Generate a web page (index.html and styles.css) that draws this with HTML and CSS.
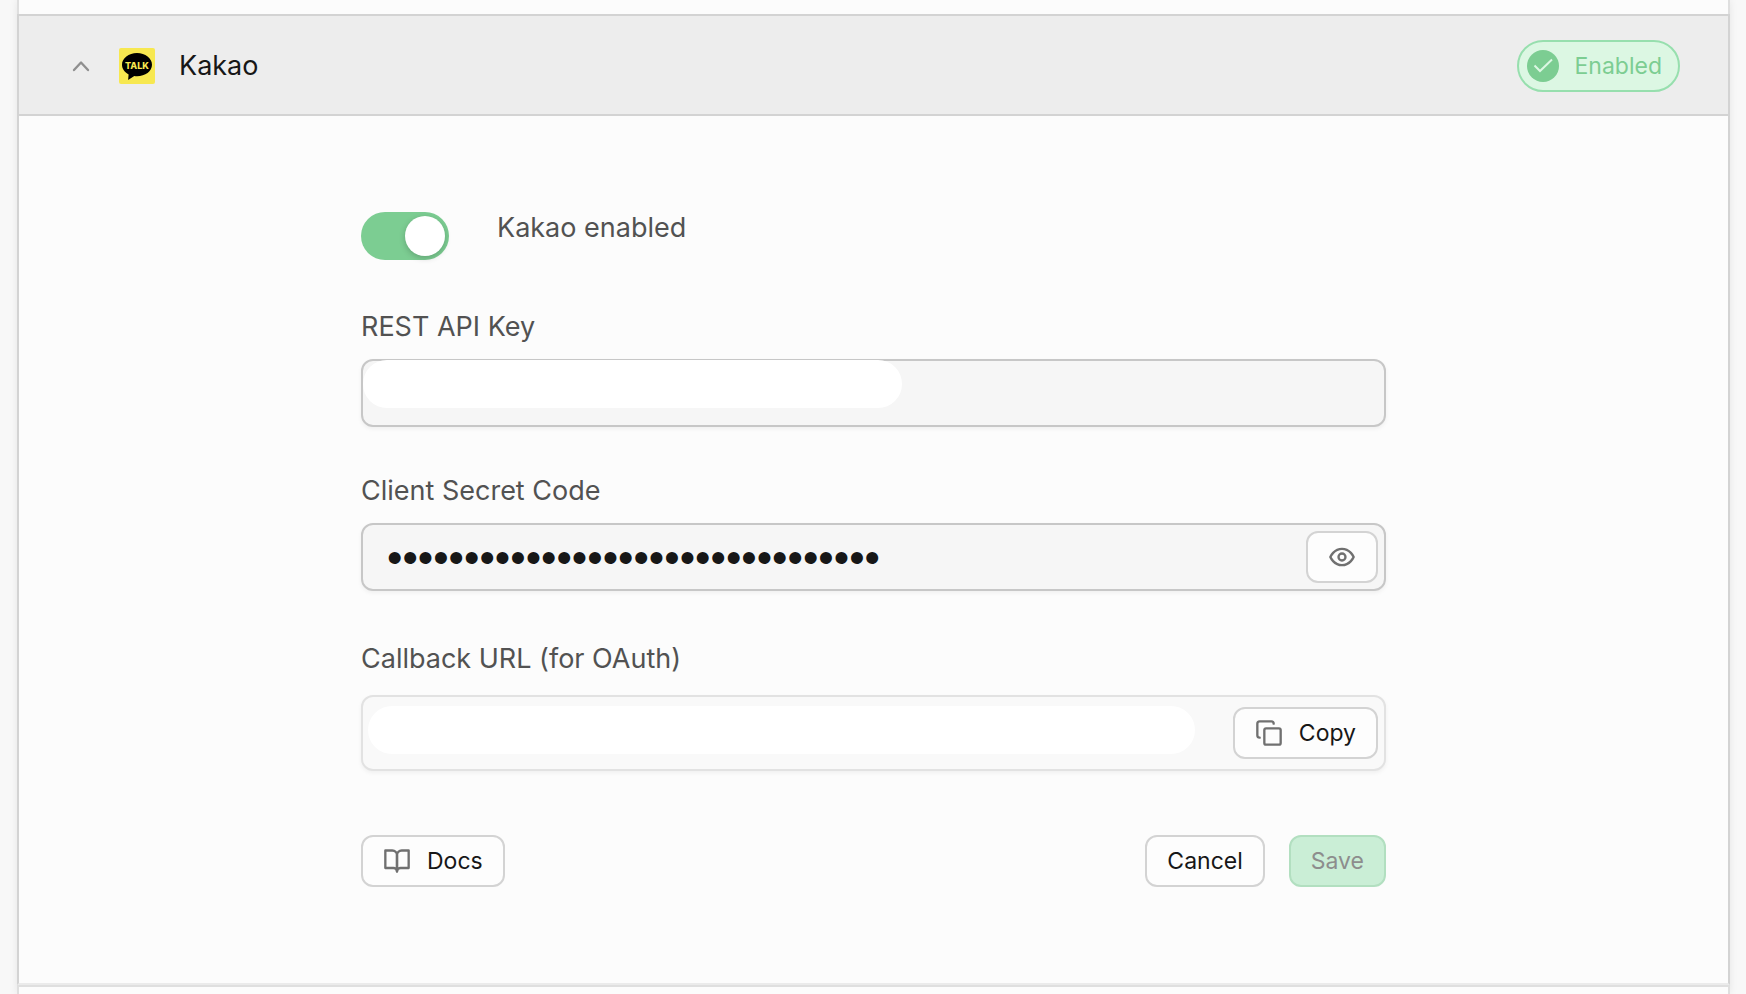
FILE: index.html
```html
<!DOCTYPE html>
<html lang="en">
<head>
  <meta charset="UTF-8" />
  <meta name="viewport" content="width=device-width, initial-scale=1.0" />
  <title>Auth Providers</title>
  <link rel="stylesheet" href="styles.css">
</head>
<body>
  <main class="providers">
    <div class="provider-prev"></div>

    <section class="provider">
      <header class="provider-header">
        <button class="collapse" type="button" aria-label="Collapse Kakao">
          <svg class="icon" viewBox="0 0 24 24"><path d="m18 15.500-6-6.500-6 6.500" /></svg>
        </button>
        <svg class="logo" viewBox="0 0 36 36">
          <rect width="36" height="36" rx="2" fill="#f7e850" />
          <path d="M18 5C9.700 5 3 10.200 3 16.700c0 4.100 2.600 7.600 6.600 9.700L9.100 32l6.200-4c.9.200 1.800.2 2.700.2 8.300 0 15-5.100 15-11.500S26.300 5 18 5z" fill="#000" />
          <text class="logo-text" x="18" y="20.500" text-anchor="middle">TALK</text>
        </svg>
        <h2 class="provider-name">Kakao</h2>
        <span class="badge">
          <svg class="badge-icon" viewBox="0 0 32 32">
            <circle cx="16" cy="16" r="16" fill="#7ccd92" />
            <path d="m7.500 15.500 5.500 5.500L25 9.500" fill="none" stroke="#dcf7e3" stroke-width="2" />
          </svg>
          Enabled
        </span>
      </header>

      <form class="provider-form">
        <div class="toggle-row">
          <input class="toggle" type="checkbox" id="enabled" checked />
          <label for="enabled">Kakao enabled</label>
        </div>

        <div class="field">
          <label for="apiKey">REST API Key</label>
          <div class="control">
            <input class="text-input" type="text" id="apiKey" />
            <span class="mask mask-key"></span>
          </div>
        </div>

        <div class="field">
          <label for="secret">Client Secret Code</label>
          <div class="control secret">
            <input class="text-input password" type="password" id="secret" value="abcdefghijklmnopqrstuvwxyz012345" />
            <button class="btn btn-eye" type="button" aria-label="Show secret">
              <svg class="icon" viewBox="0 0 24 24">
                <path d="M2 12s3-7 10-7 10 7 10 7-3 7-10 7-10-7-10-7Z" />
                <circle cx="12" cy="12" r="3" />
              </svg>
            </button>
          </div>
        </div>

        <div class="field field-callback">
          <label for="callback">Callback URL (for OAuth)</label>
          <div class="control readonly">
            <input class="callback-input" type="text" id="callback" readonly />
            <span class="mask mask-url"></span>
            <button class="btn" type="button">
              <svg class="icon" viewBox="0 0 24 24">
                <rect x="8" y="8" width="14" height="14" rx="1.500" />
                <path d="M4 16c-1.100 0-2-.9-2-2V4c0-1.100.9-2 2-2h10c1.100 0 2 .9 2 2" />
              </svg>
              Copy
            </button>
          </div>
        </div>

        <div class="actions">
          <button class="btn" type="button">
            <svg class="icon" viewBox="0 0 24 24">
              <path d="M2 3h6a4 4 0 0 1 4 4v14a3 3 0 0 0-3-3H2z" />
              <path d="M22 3h-6a4 4 0 0 0-4 4v14a3 3 0 0 1 3-3h7z" />
            </svg>
            Docs
          </button>
          <div class="actions-right">
            <button class="btn" type="reset">Cancel</button>
            <button class="btn btn-save" type="submit" disabled>Save</button>
          </div>
        </div>
      </form>
    </section>

    <div class="provider-next"></div>
  </main>
</body>
</html>
```

FILE: styles.css
```css
* {
  box-sizing: border-box;
}

body {
  margin: 0;
  background-color: #f8f8f8;
  color: #525252;
  font-family: Inter, Roboto, sans-serif;
  font-size: 27px;
  line-height: 32px;
}

button,
input {
  font: inherit;
  color: #171717;
}

.providers {
  min-height: 100vh;
  margin: 0 16px 0 17px;
  display: flex;
  flex-direction: column;
  background-color: #fcfcfc;
  box-shadow: 0 0 8px rgba(0, 0, 0, 0.08);
}

.provider-prev {
  height: 14px;
  border: solid #dfdfdf;
  border-width: 0 2px;
}

.provider-next {
  flex-grow: 1;
  border: 2px solid #dfdfdf;
  border-bottom: none;
}

.provider {
  border: 2px solid #d3d3d3;
  border-bottom-color: #ebebeb;
}

.provider-header {
  display: flex;
  align-items: center;
  gap: 24px;
  height: 100px;
  padding: 2px 48px 0;
  background-color: #ededed;
  border-bottom: 2px solid #d3d3d3;
}

.collapse {
  display: flex;
  padding: 0;
  border: none;
  background: none;
  cursor: pointer;
}

.icon {
  width: 28px;
  height: 28px;
  fill: none;
  stroke: #707070;
  stroke-width: 2;
  stroke-linecap: round;
  stroke-linejoin: round;
}

.collapse .icon {
  stroke: #8f8f8f;
}

.logo {
  width: 36px;
  height: 36px;
}

.logo-text {
  font-family: Inter, sans-serif;
  font-size: 9px;
  font-weight: 800;
  fill: #f7e850;
}

.provider-name {
  margin: 0;
  color: #171717;
  font-size: 27px;
  font-weight: 400;
}

.badge {
  display: flex;
  align-items: center;
  gap: 16px;
  height: 52px;
  margin-left: auto;
  padding: 0 16px 0 8px;
  border: 2px solid #97dfae;
  border-radius: 26px;
  background-color: #dcf7e3;
  color: #7ccd92;
  font-size: 23px;
}

.badge-icon {
  width: 32px;
  height: 32px;
}

.provider-form {
  max-width: 1025px;
  margin: 0 auto;
  padding: 96px 0;
}

.toggle-row {
  display: flex;
  gap: 48px;
  margin-bottom: 51px;
}

.toggle {
  appearance: none;
  width: 88px;
  height: 48px;
  margin: 0;
  padding: 4px;
  border-radius: 24px;
  background-color: #d3d3d3;
  cursor: pointer;
}

.toggle::before {
  content: "";
  display: block;
  width: 40px;
  height: 40px;
  border-radius: 50%;
  background-color: #fff;
  box-shadow: 0 2px 6px rgba(0, 0, 0, 0.2);
}

.toggle:checked {
  background-color: #7ccd92;
}

.toggle:checked::before {
  margin-left: auto;
}

.field {
  display: flex;
  flex-direction: column;
  gap: 16px;
  margin-bottom: 48px;
}

.field-callback {
  gap: 20px;
  margin: 52px 0 64px;
}

.control {
  position: relative;
  display: flex;
  align-items: center;
  border: 2px solid #c7c7c7;
  border-radius: 12px;
  background-color: #f6f6f6;
  box-shadow: 0 2px 4px rgba(0, 0, 0, 0.05);
}

.text-input {
  flex: 1;
  min-width: 0;
  height: 64px;
  padding: 0 24px;
  border: none;
  outline: none;
  background: none;
}

/* larger size so the bullets read as solid dots */
.password {
  padding-top: 2px;
  font-family: "Liberation Sans", Arial, sans-serif;
  font-size: 44px;
}

.secret {
  padding-right: 6px;
}

.readonly {
  padding: 10px 6px;
  border-color: #e2e2e2;
  background-color: #f9f9f9;
}

.callback-input {
  flex: 1;
  min-width: 0;
  height: 52px;
  padding: 0 24px;
  border: none;
  outline: none;
  background: none;
}

.mask {
  position: absolute;
  height: 48px;
  border-radius: 24px;
  background-color: #fff;
}

.mask-key {
  top: -1px;
  left: 0;
  width: 539px;
}

.mask-url {
  top: 9px;
  left: 5px;
  right: 189px;
}

.btn {
  display: flex;
  align-items: center;
  justify-content: center;
  gap: 16px;
  height: 52px;
  padding: 0 20px;
  border: 2px solid #d3d3d3;
  border-radius: 12px;
  background-color: #fdfdfd;
  font-size: 23px;
  cursor: pointer;
}

.btn-save {
  border-color: #b2dfc0;
  background-color: #caeed6;
  color: #8d8d8d;
  cursor: default;
}

.actions,
.actions-right {
  display: flex;
  justify-content: space-between;
  gap: 24px;
}
```
